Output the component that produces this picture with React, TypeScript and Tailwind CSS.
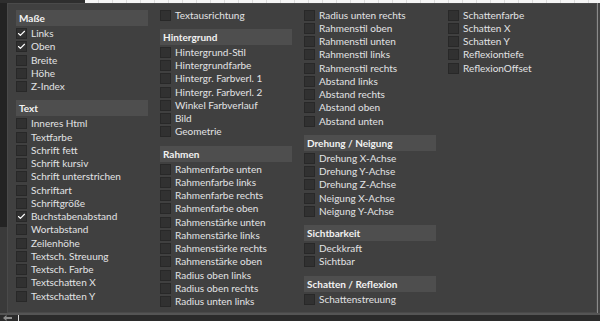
import { Check } from "lucide-react";

type Item = { label: string; checked?: boolean };
type Section = { title?: string; items: Item[] };

const columns: Section[][] = [
  [
    {
      title: "Maße",
      items: [
        { label: "Links", checked: true },
        { label: "Oben", checked: true },
        { label: "Breite" },
        { label: "Höhe" },
        { label: "Z-Index" },
      ],
    },
    {
      title: "Text",
      items: [
        { label: "Inneres Html" },
        { label: "Textfarbe" },
        { label: "Schrift fett" },
        { label: "Schrift kursiv" },
        { label: "Schrift unterstrichen" },
        { label: "Schriftart" },
        { label: "Schriftgröße" },
        { label: "Buchstabenabstand", checked: true },
        { label: "Wortabstand" },
        { label: "Zeilenhöhe" },
        { label: "Textsch. Streuung" },
        { label: "Textsch. Farbe" },
        { label: "Textschatten X" },
        { label: "Textschatten Y" },
      ],
    },
  ],
  [
    { items: [{ label: "Textausrichtung" }] },
    {
      title: "Hintergrund",
      items: [
        { label: "Hintergrund-Stil" },
        { label: "Hintergrundfarbe" },
        { label: "Hintergr. Farbverl. 1" },
        { label: "Hintergr. Farbverl. 2" },
        { label: "Winkel Farbverlauf" },
        { label: "Bild" },
        { label: "Geometrie" },
      ],
    },
    {
      title: "Rahmen",
      items: [
        { label: "Rahmenfarbe unten" },
        { label: "Rahmenfarbe links" },
        { label: "Rahmenfarbe rechts" },
        { label: "Rahmenfarbe oben" },
        { label: "Rahmenstärke unten" },
        { label: "Rahmenstärke links" },
        { label: "Rahmenstärke rechts" },
        { label: "Rahmenstärke oben" },
        { label: "Radius oben links" },
        { label: "Radius oben rechts" },
        { label: "Radius unten links" },
      ],
    },
  ],
  [
    {
      items: [
        { label: "Radius unten rechts" },
        { label: "Rahmenstil oben" },
        { label: "Rahmenstil unten" },
        { label: "Rahmenstil links" },
        { label: "Rahmenstil rechts" },
        { label: "Abstand links" },
        { label: "Abstand rechts" },
        { label: "Abstand oben" },
        { label: "Abstand unten" },
      ],
    },
    {
      title: "Drehung / Neigung",
      items: [
        { label: "Drehung X-Achse" },
        { label: "Drehung Y-Achse" },
        { label: "Drehung Z-Achse" },
        { label: "Neigung X-Achse" },
        { label: "Neigung Y-Achse" },
      ],
    },
    {
      title: "Sichtbarkeit",
      items: [{ label: "Deckkraft" }, { label: "Sichtbar" }],
    },
    {
      title: "Schatten / Reflexion",
      items: [{ label: "Schattenstreuung" }],
    },
  ],
  [
    {
      items: [
        { label: "Schattenfarbe" },
        { label: "Schatten X" },
        { label: "Schatten Y" },
        { label: "Reflexiontiefe" },
        { label: "ReflexionOffset" },
      ],
    },
  ],
];

function Row({ item }: { item: Item }) {
  return (
    <label className="flex h-[13.25px] items-center gap-[4px]">
      <span className="flex size-[11px] shrink-0 items-center justify-center border border-[#282828] bg-[#313131]">
        {item.checked ? (
          <Check size={9} strokeWidth={3} className="text-white" aria-hidden="true" />
        ) : null}
      </span>
      <span className="whitespace-nowrap text-[10px] leading-[13.25px] text-[#e2e3e5]">
        {item.label}
      </span>
    </label>
  );
}

function Column({ sections }: { sections: Section[] }) {
  return (
    <div className="flex flex-col">
      {sections.map((s, i) => (
        <div key={i} className="flex flex-col">
          {s.title ? (
            <div
              className={`${i === 0 ? "mt-[1.5px]" : "mt-[7px]"} mb-[1px] flex h-[16px] items-center bg-[#4e4e4e] px-[3px] text-[10px] font-bold leading-[16px] text-[#f2f2f2]`}
            >
              {s.title}
            </div>
          ) : null}
          {s.items.map((it) => (
            <Row key={it.label} item={it} />
          ))}
        </div>
      ))}
    </div>
  );
}

export default function App() {
  return (
    <div className="flex h-[321px] w-[600px] flex-col overflow-hidden bg-[#2c2c2c] font-['Lato',sans-serif]">
      {/* page strip behind the popup */}
      <div className="flex h-[3px] shrink-0">
        <div className="w-[85px] bg-[#2e2e2e]" />
        <div className="flex-1 bg-[repeating-linear-gradient(90deg,#f5f5f5_0px,#f5f5f5_13px,#dcdcdc_13px,#dcdcdc_14px)]" />
      </div>
      <div className="flex h-[310px] shrink-0">
        <div className="flex w-[7px] flex-col">
          <div className="h-[224px] bg-[#232323]" />
          <div className="flex-1 bg-[#3a3a3a]" />
        </div>
        <div className="w-[590px] border border-[#4a4a4a] bg-[#404040] pl-[8px] pt-[4.5px]">
          <div className="grid grid-cols-[132px_132px_132px_132px] gap-x-[12px]">
            {columns.map((c, i) => (
              <Column key={i} sections={c} />
            ))}
          </div>
        </div>
        <div className="w-px bg-[#8a8a8a]" />
        <div className="flex-1 bg-[#444444]" />
      </div>
      <div className="flex flex-1 items-start border-t-2 border-[#555555] bg-[#2b2b2b]">
        <svg width="9" height="6" viewBox="0 0 9 6" className="ml-[3px]" aria-hidden="true">
          <path d="M0 3 L3.5 0 L3.5 2 L9 2 L9 4 L3.5 4 L3.5 6 Z" fill="#8c8c8c" />
        </svg>
        <span className="ml-[6px] h-full w-px bg-[#dddddd]" />
      </div>
    </div>
  );
}
